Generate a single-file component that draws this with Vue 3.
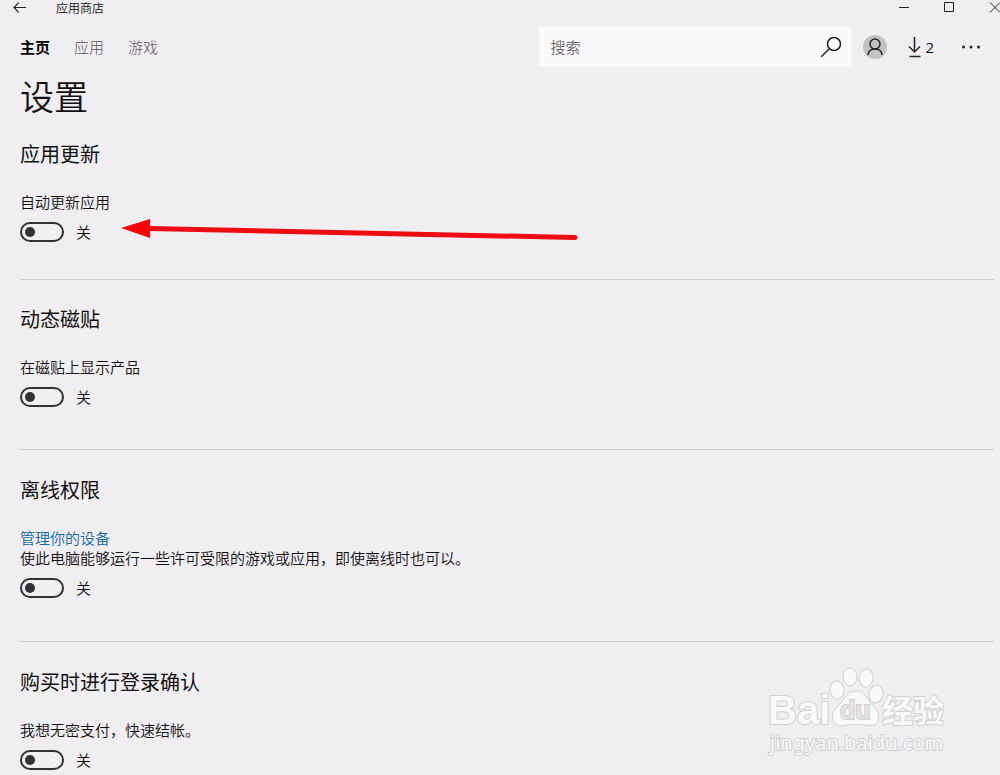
<script setup>
import { reactive, ref } from 'vue'

const query = ref('')
const tabs = ['主页', '应用', '游戏']
const current = ref('主页')

const sections = reactive([
  { id: 'updates', title: '应用更新', text: '自动更新应用', on: false },
  { id: 'tiles', title: '动态磁贴', text: '在磁贴上显示产品', on: false },
  {
    id: 'offline',
    title: '离线权限',
    link: '管理你的设备',
    text: '使此电脑能够运行一些许可受限的游戏或应用，即使离线时也可以。',
    on: false
  },
  { id: 'purchase', title: '购买时进行登录确认', text: '我想无密支付，快速结帐。', on: false }
])
</script>

<template>
  <div class="window">
    <div class="titlebar">
      <button class="icon-btn back" type="button" aria-label="返回">
        <svg width="14" height="12" viewBox="0 0 14 12"><path d="M13 5.500H1M5.800 .7L1 5.500l4.800 4.800" /></svg>
      </button>
      <span class="app-name">应用商店</span>
      <div class="controls">
        <button class="icon-btn" type="button" aria-label="最小化">
          <svg width="11" height="11" viewBox="0 0 11 11"><path d="M0 5.500h10" /></svg>
        </button>
        <button class="icon-btn" type="button" aria-label="最大化">
          <svg width="11" height="11" viewBox="0 0 11 11"><path d="M.5 .5h9v9h-9z" /></svg>
        </button>
        <button class="icon-btn" type="button" aria-label="关闭">
          <svg width="11" height="11" viewBox="0 0 11 11"><path d="M1 .5l10 10M11 .5l-10 10" /></svg>
        </button>
      </div>
    </div>

    <header class="header">
      <nav class="tabs">
        <a
          v-for="tab in tabs"
          :key="tab"
          href="#"
          class="tab"
          :class="{ active: tab === current }"
          @click.prevent="current = tab"
        >{{ tab }}</a>
      </nav>
      <form class="search" role="search" @submit.prevent>
        <input v-model="query" class="search-input" type="text" placeholder="搜索" aria-label="搜索" />
        <button class="icon-btn" type="submit" aria-label="搜索">
          <svg width="22" height="22" viewBox="0 0 22 22" class="search-icon">
            <circle cx="14" cy="8" r="6.500" /><path d="M9.300 12.700L1.200 20.800" />
          </svg>
        </button>
      </form>
      <button class="icon-btn avatar" type="button" aria-label="帐户">
        <svg width="24" height="24" viewBox="0 0 24 24" class="person">
          <circle cx="12" cy="12" r="12" class="disc" />
          <circle cx="12" cy="9" r="5" />
          <path d="M5 20c.3-3.600 3-6 7-6s6.700 2.400 7 6" />
        </svg>
      </button>
      <button class="icon-btn downloads" type="button" aria-label="下载 2">
        <svg width="14" height="22" viewBox="0 0 14 22" class="download">
          <path d="M6.500 1v15M1 10.500L6.500 16l5.500-5.500M1.500 20.500h11" />
        </svg>
        <span>2</span>
      </button>
      <button class="icon-btn more" type="button" aria-label="更多">
        <svg width="18" height="4" viewBox="0 0 18 4" class="dots">
          <circle cx="1.500" cy="2" r="1.500" /><circle cx="9" cy="2" r="1.500" /><circle cx="16.500" cy="2" r="1.500" />
        </svg>
      </button>
    </header>

    <main class="content">
      <h1 class="title">设置</h1>
      <section v-for="s in sections" :key="s.id" class="section" :class="s.id">
        <h2 class="heading">{{ s.title }}</h2>
        <a v-if="s.link" href="#" class="link" @click.prevent>{{ s.link }}</a>
        <label class="text" :for="s.id">{{ s.text }}</label>
        <div class="toggle-row">
          <input :id="s.id" v-model="s.on" class="toggle" type="checkbox" role="switch" />
          <span>{{ s.on ? '开' : '关' }}</span>
        </div>
      </section>
    </main>

    <svg class="arrow" width="460" height="24" viewBox="0 0 460 24" aria-hidden="true">
      <path d="M28 10.500L454 19.500" class="shaft" />
      <path d="M0 10L29 1v19z" class="head" />
    </svg>

    <svg class="watermark" width="190" height="96" viewBox="0 0 190 96" aria-hidden="true">
      <g class="mark">
        <text x="3" y="58" class="latin">Bai</text>
        <ellipse cx="72" cy="24" rx="7" ry="9" transform="rotate(-8 72 24)" />
        <ellipse cx="85" cy="11" rx="7" ry="9" />
        <ellipse cx="101" cy="12" rx="7" ry="9" transform="rotate(8 101 12)" />
        <ellipse cx="111" cy="28" rx="7" ry="9" transform="rotate(12 111 28)" />
        <path d="M91 25c-9 0-12 9-18 15-6 5-7 11-4 16 3 5 9 4 14 3 6-1 11-1 17 0 5 1 11 1 13-4 2-6 0-11-5-15-6-6-8-15-17-15z" />
        <text x="75" y="53" class="du">du</text>
        <text x="117" y="56" class="han">经验</text>
        <text x="5" y="84" class="site">jingyan.baidu.com</text>
      </g>
    </svg>
  </div>
</template>

<style>
body {
  margin: 0;
  background: #f0eef1;
}
</style>

<style scoped>
.window {
  position: relative;
  min-height: 100vh;
  overflow: hidden;
  box-sizing: border-box;
  background: #f0eef1;
  color: #111;
  font-family: "Noto Sans CJK SC", sans-serif;
  font-size: 15px;
  font-weight: 350;
  line-height: 20px;
}
.icon-btn {
  display: flex;
  align-items: center;
  flex: none;
  padding: 0;
  border: 0;
  background: none;
  color: inherit;
  font: inherit;
}
svg {
  display: block;
  fill: none;
  stroke: #222;
  stroke-width: 1;
}
.titlebar {
  display: flex;
  align-items: center;
  height: 15px;
  padding-left: 13px;
  font-size: 12px;
  line-height: 15px;
}
.back svg {
  stroke-width: 1.2;
}
.app-name {
  margin-left: 29px;
}
.controls {
  display: flex;
  gap: 34px;
  margin-left: auto;
}
.header {
  display: flex;
  align-items: center;
  height: 40px;
  margin-top: 12px;
  padding: 0 20px;
}
.tabs {
  display: flex;
  gap: 24px;
  margin-right: auto;
}
.tab {
  color: #555;
  text-decoration: none;
  font-weight: 300;
  white-space: nowrap;
}
.tab.active {
  color: #000;
  font-weight: 700;
}
.search {
  display: flex;
  align-items: center;
  flex: 0 1 312px;
  min-width: 0;
  height: 40px;
  box-sizing: border-box;
  padding: 0 9px 0 11px;
  background: #fbf9fc;
}
.search-input {
  flex: 1;
  min-width: 0;
  padding: 0;
  border: 0;
  outline: 0;
  background: none;
  font: inherit;
}
.search-input::placeholder {
  color: #666;
  opacity: 1;
}
.search-icon {
  stroke-width: 1.5;
}
.avatar {
  margin-left: 12px;
}
.person {
  stroke-width: 1.4;
}
.person .disc {
  fill: #c3c1c4;
  stroke: none;
}
.downloads {
  gap: 3px;
  margin-left: 21px;
  font-family: "Open Sans", sans-serif;
  font-weight: 400;
}
.download {
  stroke-width: 1.5;
}
.more {
  margin-left: 28px;
}
.dots {
  fill: #222;
  stroke: none;
}
.content {
  padding: 4px 6px 0 20px;
}
.title {
  margin: 0 0 19px;
  font-size: 34px;
  font-weight: 350;
  line-height: 50px;
}
.section {
  padding: 25px 0 42px;
  border-bottom: 1px solid #cccacd;
}
.section.updates {
  padding: 0 0 37px;
}
.section.offline {
  padding: 26px 0 43px;
}
.section.purchase {
  padding: 26px 0 0;
  border: 0;
}
.heading {
  margin: 0 0 24px;
  font-size: 20px;
  font-weight: 400;
  line-height: 28px;
}
.link {
  display: block;
  width: fit-content;
  color: #1469a3;
  text-decoration: none;
}
.text {
  display: block;
}
.toggle-row {
  display: flex;
  align-items: center;
  gap: 12px;
  margin-top: 10px;
}
.toggle {
  appearance: none;
  display: flex;
  align-items: center;
  width: 44px;
  height: 20px;
  margin: 0;
  padding: 0 3px;
  box-sizing: border-box;
  border: 2px solid #333135;
  border-radius: 10px;
}
.toggle::before {
  content: "";
  width: 10px;
  height: 10px;
  border-radius: 50%;
  background: #333135;
}
.toggle:checked {
  justify-content: flex-end;
}
.arrow {
  position: absolute;
  top: 218px;
  left: 121px;
  pointer-events: none;
}
.shaft {
  stroke: #ee0c10;
  stroke-width: 5;
  stroke-linecap: round;
}
.head {
  fill: #fb0007;
  stroke: none;
}
.watermark {
  position: absolute;
  right: 45px;
  bottom: 13px;
  pointer-events: none;
}
.mark {
  fill: #fbfafb;
  stroke: #d0ced1;
  stroke-width: 1;
}
.mark text {
  paint-order: stroke;
  stroke-width: 2;
}
.latin {
  font: 700 40px "Liberation Sans", sans-serif;
}
.mark .du {
  font: 700 25px "Liberation Sans", sans-serif;
  fill: #e4e2e5;
}
.han {
  font: 700 31px "Noto Sans CJK SC", sans-serif;
}
.site {
  font: 400 20px "Noto Sans", sans-serif;
}
</style>
